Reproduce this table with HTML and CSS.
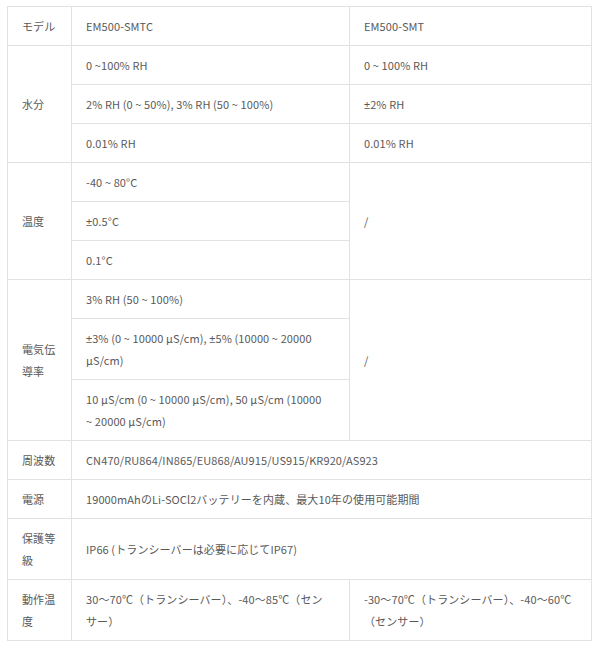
FILE: index.html
```html
<!DOCTYPE html>
<html lang="ja">
<head>
<meta charset="utf-8">
<link rel="stylesheet" href="styles.css">
</head>
<body>
<table class="spec">
  <colgroup>
    <col class="c1">
    <col class="c2">
    <col class="c3">
  </colgroup>
  <tbody>
    <tr><td>モデル</td><td>EM500-SMTC</td><td>EM500-SMT</td></tr>
    <tr><td rowspan="3">水分</td><td>0 ~100% RH</td><td>0 ~ 100% RH</td></tr>
    <tr><td>2% RH (0 ~ 50%), 3% RH (50 ~ 100%)</td><td><span class="pm">±</span>2% RH</td></tr>
    <tr><td>0.01% RH</td><td>0.01% RH</td></tr>
    <tr><td rowspan="3">温度</td><td>-40 ~ 80°C</td><td rowspan="3">/</td></tr>
    <tr><td><span class="pm">±</span>0.5°C</td></tr>
    <tr><td>0.1°C</td></tr>
    <tr><td rowspan="3">電気伝導率</td><td>3% RH (50 ~ 100%)</td><td rowspan="3">/</td></tr>
    <tr><td><span class="pm">±</span>3% (0 ~ 10000 µS/cm), <span class="pm">±</span>5% (10000 ~ 20000 µS/cm)</td></tr>
    <tr><td>10 µS/cm (0 ~ 10000 µS/cm), 50 µS/cm (10000 ~&nbsp;20000 µS/cm)</td></tr>
    <tr><td>周波数</td><td colspan="2">CN470/RU864/IN865/EU868/AU915/US915/KR920/AS923</td></tr>
    <tr><td>電源</td><td colspan="2">19000mAhのLi-SOCl2バッテリーを内蔵、最大10年の使用可能期間</td></tr>
    <tr><td>保護等級</td><td colspan="2">IP66 (トランシーバーは必要に応じてIP67)</td></tr>
    <tr><td>動作温度</td><td>30〜70℃（トランシーバー）、-40〜85℃（センサー）</td><td>-30〜70℃（トランシーバー）、-40〜60℃（センサー）</td></tr>
  </tbody>
</table>
</body>
</html>
```
FILE: styles.css
```css
html, body {
  margin: 0;
  padding: 0;
  background: #ffffff;
}
body {
  padding: 6px 0 0 7px;
}
.spec {
  border-collapse: collapse;
  table-layout: fixed;
  width: 584px;
  font-family: "Noto Sans CJK JP", "Noto Sans", sans-serif;
  font-size: 11px;
  letter-spacing: 0.1px;
  color: #595959;
}
.c1 { width: 64px; }
.c2 { width: 278px; }
.c3 { width: 242px; }
.spec td {
  border: 1px solid #e2e2e2;
  padding: 8px 16px 8px 14px;
  line-height: 22px;
  vertical-align: middle;
  text-align: left;
  word-break: normal;
  overflow-wrap: break-word;
}
.spec td:first-child {
  padding-right: 14px;
}
.pm {
  font-family: "Liberation Sans", sans-serif;
  line-height: 0;
}
```
